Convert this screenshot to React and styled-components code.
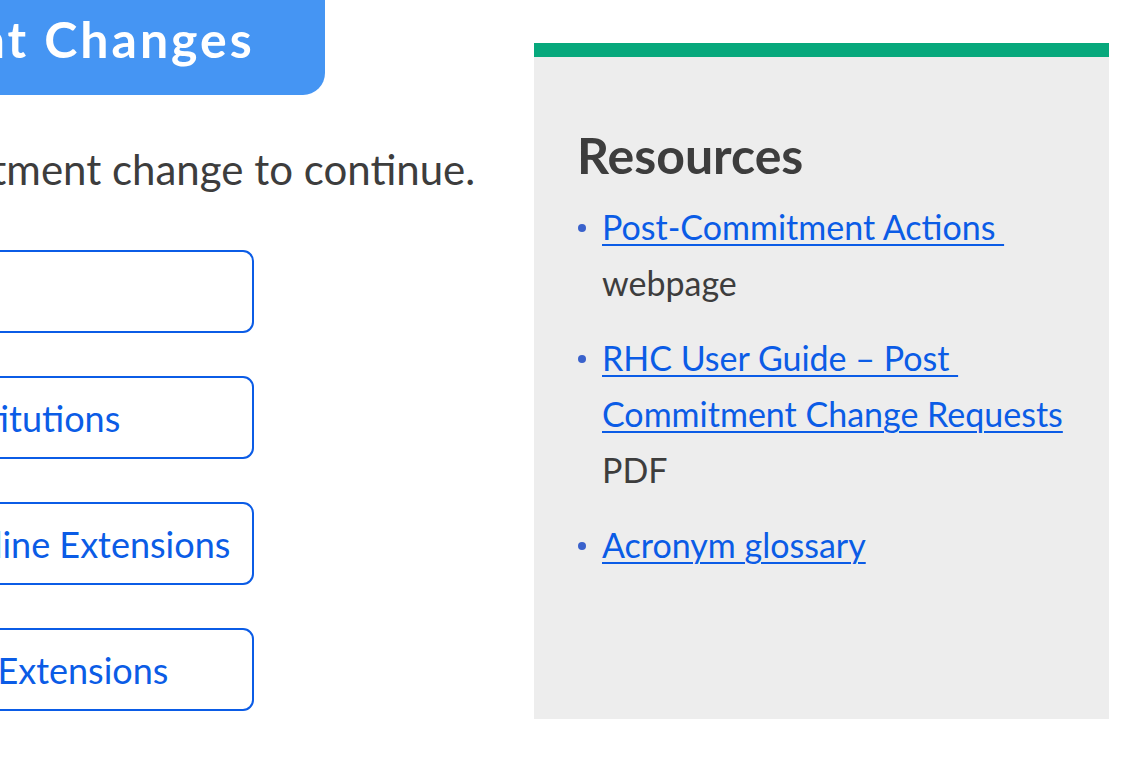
import React from 'react';
import styled, {createGlobalStyle} from 'styled-components';

const GlobalStyle = createGlobalStyle`
    html, body{margin:0; padding:0; background:#fff;}
    body{
        font-family: 'Lato', 'Liberation Sans', sans-serif;
        color:#3d3d3d;
        overflow:hidden;
        width:1146px;
        height:763px;
    }
    *{box-sizing:border-box;}
`;

const PageWrap = styled.div`
    display:flex;
    align-items:flex-start;
    gap:34px;
    margin-left:-460px;
    width:1569px;
`;

const Main = styled.main`
    width:960px;
    flex-shrink:0;
    display:flex;
    flex-direction:column;
    align-items:flex-start;
`;

const Banner = styled.h1`
    margin:-20px 0 0 0;
    width:785px;
    height:115px;
    padding:2px 0 0 35px;
    display:flex;
    align-items:center;
    background-color:#4595f3;
    border-bottom-right-radius:22px;
    color:#fff;
    font-size:50px;
    font-weight:700;
    letter-spacing:3px;
    white-space:nowrap;
`;

const Intro = styled.p`
    margin:46px 0 0 78px;
    font-size:42px;
    line-height:56px;
    white-space:nowrap;
`;

const ChoiceList = styled.div`
    margin:53px 0 0 212px;
    display:flex;
    flex-direction:column;
    gap:43px;
`;

const ChoiceButton = styled.button`
    width:502px;
    height:83px;
    padding:0 0 0 34px;
    display:flex;
    align-items:center;
    background:#fff;
    border:2px solid #0b5ce6;
    border-radius:11px;
    color:#0b5ce6;
    font-family:inherit;
    font-size:36px;
    white-space:nowrap;
    cursor:pointer;
`;

const Aside = styled.aside`
    margin-top:43px;
    width:575px;
    height:676px;
    flex-shrink:0;
    background-color:#ededed;
    border-top:14px solid #07a87c;
    padding:66px 40px 0 43px;
`;

const AsideTitle = styled.h2`
    margin:0;
    font-size:50px;
    font-weight:700;
    line-height:64px;
    color:#3d3d3d;
`;

const ResourceList = styled.ul`
    list-style:none;
    margin:12px 0 0 0;
    padding:0;
    display:flex;
    flex-direction:column;
    gap:19px;
`;

const ResourceItem = styled.li`
    position:relative;
    padding-left:25px;
    font-size:34px;
    line-height:56px;
    &::before{
        content:'';
        position:absolute;
        left:1px;
        top:25px;
        width:8px;
        height:8px;
        border-radius:50%;
        background-color:#3a62cc;
    }
    a{color:#0b5ce6; text-decoration:underline; text-underline-offset:4px; text-decoration-thickness:2px;}
    span{display:block; color:#3d3d3d;}
`;

const choices = [
    'SPIN Change',
    'Service Substitutions',
    'Invoice Deadline Extensions',
    'Service Date Extensions',
];

const resources = [
    {label: 'Post-Commitment Actions\u00a0', type: 'webpage'},
    {label: 'RHC User Guide \u2013 Post\u00a0 Commitment Change Requests', type: 'PDF'},
    {label: 'Acronym glossary'},
];

const App = () => {
    return(
        <>
            <GlobalStyle/>
            <PageWrap>
                <Main>
                    <Banner>Post-Commitment Changes</Banner>
                    <Intro>Select a post-commitment change to continue.</Intro>
                    <ChoiceList>
                        {choices.map(c => (
                            <ChoiceButton key={c}>{c}</ChoiceButton>
                        ))}
                    </ChoiceList>
                </Main>
                <Aside>
                    <AsideTitle>Resources</AsideTitle>
                    <ResourceList>
                        {resources.map(r => (
                            <ResourceItem key={r.label}>
                                <a href="#">{r.label}</a>
                                {r.type && <span>{r.type}</span>}
                            </ResourceItem>
                        ))}
                    </ResourceList>
                </Aside>
            </PageWrap>
        </>
    );
}

export default App;
